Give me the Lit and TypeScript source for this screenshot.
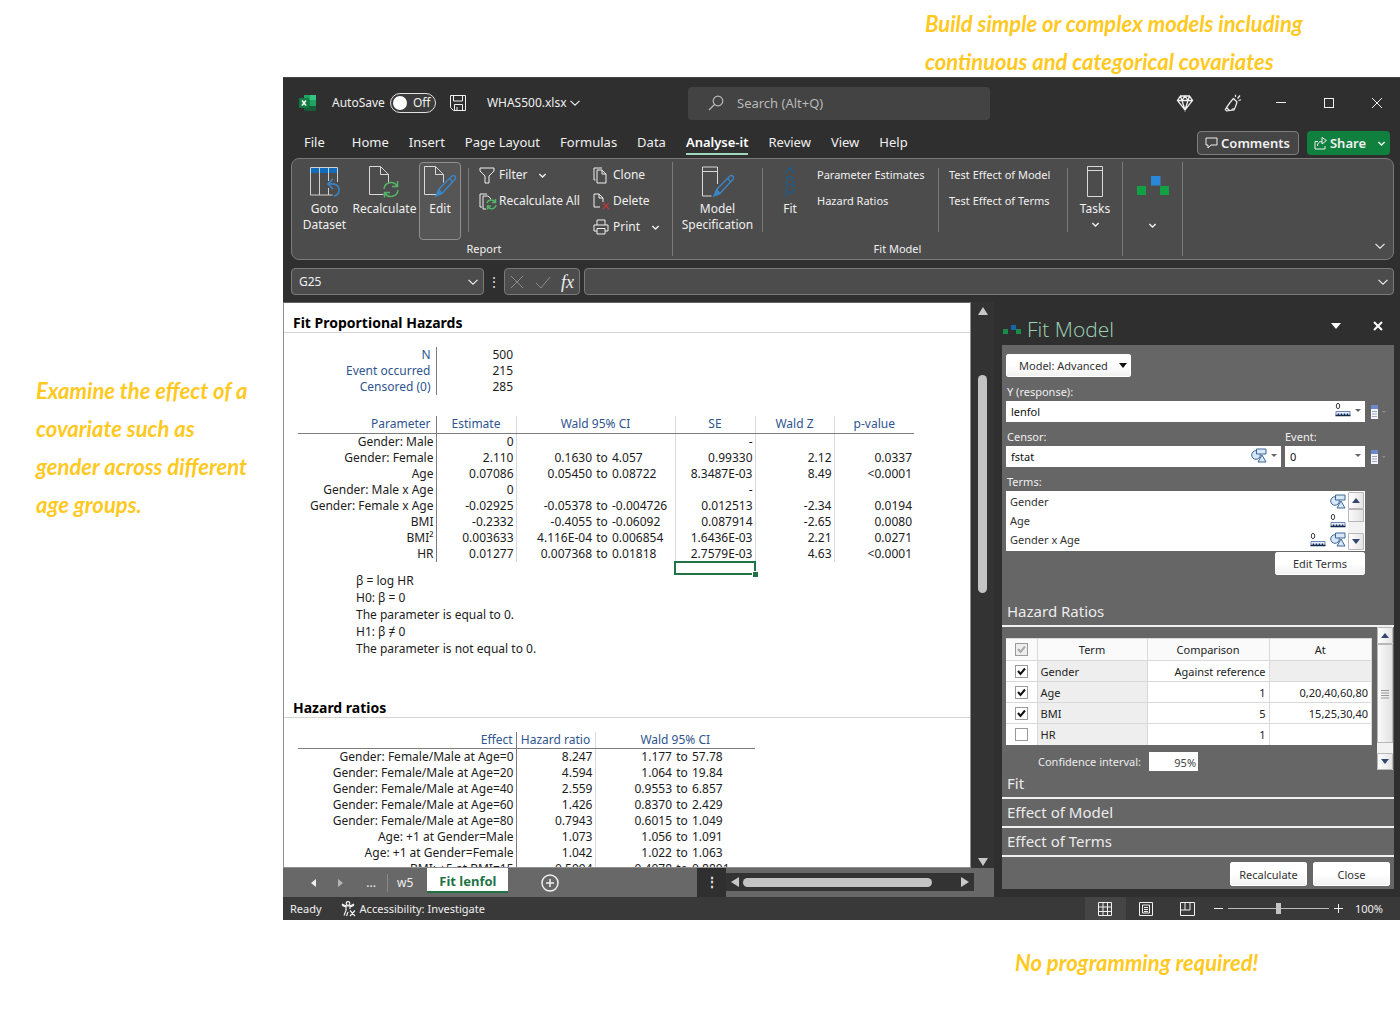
import { LitElement, html, css, svg, nothing } from "lit";
import { customElement, state } from "lit/decorators.js";
import { classMap } from "lit/directives/class-map.js";

const base = css`
  * { box-sizing: border-box; }
  button, select, input { font: inherit; color: inherit; margin: 0; padding: 0; border: 0; background: none; }
  button { cursor: pointer; white-space: nowrap; }
  svg { display: block; flex: none; overflow: visible; }
  svg:not([fill]) { fill: none; }
  svg:not([stroke]) { stroke: currentColor; }
  a { color: inherit; text-decoration: none; }
  table { border-collapse: collapse; table-layout: fixed; }
  h1, h2, p, ul { margin: 0; padding: 0; font-weight: inherit; list-style: none; }
`;

const chevron = (w = 10) => html`<svg width=${w} height=${w} viewBox="0 0 10 10" stroke-width=${w > 8 ? 1.1 : 2} aria-hidden="true"><path d="M.5 2.8 5 7.2 9.5 2.8" /></svg>`;

const page = svg`<path d="M1.5.5h11l8 8v8M20.5 8.5h-8v-8M1.5.5v28h14" stroke="#d8d8d8"/>`;
const pencil = svg`<path d="m16 23 13-13q1.8-1 3 .3t0 3L19 27.5l-6 2.5zM26.5 12.5l3 3" stroke="#3a86c8" stroke-width="1.4"/><path d="m16 23-3 7 6-2.5z" fill="#3a86c8" stroke="#3a86c8"/>`;
const cycle = svg`<path d="M16 23a7 7 0 0 1 13-3M30 24a7 7 0 0 1-13 3M29.5 15v5.5H24M16.5 31.5V26.5H22" stroke="#55b567" stroke-width="1.5"/>`;

const icons = {
  excel: html`<svg width="18" height="18" viewBox="0 0 18 18" stroke="none"><path d="M5 1h6v5H5z" fill="#21a366"/><path d="M11 1h6v5h-6z" fill="#33c481"/><path d="M5 6h6v6H5z" fill="#107c41"/><path d="M11 6h6v6h-6z" fill="#21a366"/><path d="M5 12h12v5H5z" fill="#185c37"/><rect x="0" y="4" width="10" height="10" rx="1" fill="#107c41"/><path d="m3 6.500 4 5M7 6.500l-4 5" stroke="#fff" stroke-width="1.5"/></svg>`,
  save: html`<svg width="18" height="18" viewBox="0 0 18 18"><path d="M1.500 1.500h15v15h-12l-3-3zM4.500 1.500v5.500h9V1.500M5.500 16.500v-6h8v6M8 13v3.500"/></svg>`,
  search: html`<svg width="16" height="16" viewBox="0 0 16 16" stroke-width="1.2"><circle cx="10" cy="6" r="4.8"/><path d="M6.500 9.500 1 15"/></svg>`,
  diamond: html`<svg width="16" height="16" viewBox="0 0 16 16" stroke-width="1.3"><path d="M3.500 1h9l3 4.500L8 15 .5 5.500zM.5 5.500h15M5 5.500 8 15l3-9.500L8 1 5 5.500 3.500 1M12.500 1 11 5.500"/></svg>`,
  megaphone: html`<svg width="18" height="18" viewBox="0 0 18 18" stroke-width="1.2"><path d="M9.500 4.500 13 8q-1 4-3 8l-7.500.8L1.300 15.500Q6 8 9.500 4.500zM2.500 13.500l3 3M7.500 16q2-2.500 3 0M11.500 3V.800M13.500 4.500 16 1.500M14.500 6.500l2.500-.8"/></svg>`,
  comment: html`<svg width="13" height="12" viewBox="0 0 13 12"><path d="M1 1h11v7H6l-3 3V8H1z"/></svg>`,
  share: html`<svg width="13" height="13" viewBox="0 0 13 13"><path d="M4 4.500H1v7.500h10V9M3.500 9c0-3 1.500-4.500 4.500-4.500V7l4.500-3.500L8 .500V4.500"/></svg>`,
  goto: html`<svg width="32" height="31" viewBox="0 0 32 31"><path d="M1.500 29V1.500h27V13M10.500 6v23M19.500 6v9M19.500 22v7M28.500 13v3M1.500 29h22" stroke="#d0d0d0"/><path d="M2 2h26v5H2z" fill="#0f6cbd" stroke="none"/><path d="M10.500 2v5M19.500 2v5" stroke="#d0d0d0"/><path d="m24 13-5 5 5 5M19 18h6q5 1 5 6t-5 6" stroke="#3a86c8" stroke-width="1.5"/></svg>`,
  recalc: html`<svg width="34" height="31" viewBox="0 0 34 31">${page}${cycle}</svg>`,
  edit: html`<svg width="34" height="31" viewBox="0 0 34 31">${page}${pencil}</svg>`,
  model: html`<svg width="34" height="31" viewBox="0 0 34 31"><path d="M1.500 1h15v17M1.500 1v29h9M1.500 5.500h15" stroke="#d8d8d8"/>${pencil}</svg>`,
  beta: html`<svg width="12" height="31" viewBox="0 0 12 31"><path d="m2 7 4-6 4 6M2.500 30V12.500q0-2 3-2 4 0 4 3.500T6 18.500q5 0 4.500 4T5 26.500H3M5 18.500h2" stroke="#175f92" stroke-width="1.5" stroke-dasharray="3 1"/></svg>`,
  tasks: html`<svg width="16" height="31" viewBox="0 0 16 31"><path d="M.5.5h15v30H.500zM.5 4.500h15" stroke="#d8d8d8"/></svg>`,
  logo: html`<svg width="34" height="20" viewBox="0 0 34 20" stroke="none"><path d="M1 10h9v9H1zM24 10h9v9h-9z" fill="#11a044"/><path d="M15 0h9.500v9.500H15z" fill="#2b88d8"/></svg>`,
  filter: html`<svg width="18" height="17" viewBox="0 0 18 17"><path d="M1 1h14v3L10 9v7H6V9L1 4z"/></svg>`,
  recalcAll: html`<svg width="18" height="17" viewBox="0 0 18 17"><path d="M3 14H1V1h7M4 16V3h5l3 3M4 16h3"/><path d="M8 10a4.500 4.500 0 0 1 8-1M17 12a4.500 4.500 0 0 1-8 2M16.500 6v3.500H13M8.500 16.500V13H12" stroke="#55b567" stroke-width="1.5"/></svg>`,
  clone: html`<svg width="18" height="17" viewBox="0 0 18 17"><path d="M2.500 13H1V1h8M4 3h5l4 4v9H4zM9 3v4h4"/></svg>`,
  del: html`<svg width="18" height="17" viewBox="0 0 18 17"><path d="M7 14H1V1h5l4 4v4M6 1v4h4"/><path d="m10 10 6 6M16 10l-6 6" stroke="#c1373a" stroke-width="1.3"/></svg>`,
  print: html`<svg width="18" height="16" viewBox="0 0 18 16"><path d="M4 6V1h8v5M4 12H1V6h14v6h-3M4 9.500h8v5.500H4z"/></svg>`,
  ruler: html`<svg width="16" height="14" viewBox="0 0 16 14"><path d="M1 8.500h14v4H1z" fill="#e6eefb" stroke="#6b87b5"/><path d="M.5 12.500h15M3.500 12v-1.500M6.500 12v-1.500M9.500 12v-1.500M12.500 12v-1.500" stroke="#13294f" stroke-width="1.5"/><ellipse cx="3" cy="3" rx="1.7" ry="2.7" stroke="#444"/></svg>`,
  shapes: html`<svg width="16" height="15" viewBox="0 0 16 15" stroke="#3f6796" fill="#d7e8fa"><circle cx="5" cy="7" r="4.3"/><path d="M5.500 1h9.500v5H5.500zM11 7l4 7H7z"/></svg>`,
  column: html`<svg width="7" height="14" viewBox="0 0 7 14" stroke="none"><path d="M0 0h7v14H0z" fill="#f3f5fa"/><path d="M0 0h7v4H0z" fill="#6d89cc"/><path d="M1 6.500h5M1 9h5M1 11.500h5" stroke="#9aa7c4"/></svg>`,
  access: html`<svg width="16" height="16" viewBox="0 0 16 16" stroke-width="1.2"><circle cx="7" cy="2.5" r="1.8"/><path d="M1 4.500 5 6v3.500l-2 5M13 4.500 9 6v2M1 3q2 2 6 2t6-2M5.500 15 7 11M9 9.500l5 5.500M14 9.500 9 15"/></svg>`,
};

const TABS = ["File", "Home", "Insert", "Page Layout", "Formulas", "Data", "Analyse-it", "Review", "View", "Help"];

@customElement("excel-head")
class ExcelHead extends LitElement {
  static styles = [base, css`
    :host { display: block; background: #2f2f2f; color: #f0f0f0; font: 12px/16px "Noto Sans", "Open Sans", sans-serif; padding: 0 6px 7px 8px; border-top: 1px solid #454545; }
    .title { display: flex; align-items: center; height: 50px; padding: 0 10px 0 8px; }
    .left { display: flex; align-items: center; flex: 0 0 389px; }
    .autosave { display: flex; align-items: center; gap: 5px; margin: 0 13px 0 15px; }
    .toggle { display: flex; align-items: center; gap: 6px; width: 46px; height: 20px; border: 1px solid #e0e0e0; border-radius: 10px; padding: 0 2px; background: #3b3b3b; }
    .knob { width: 14px; height: 14px; border-radius: 50%; background: #fff; }
    .file { display: flex; align-items: center; gap: 3px; margin-left: 20px; }
    .search { display: flex; align-items: center; gap: 13px; flex: 0 1 302px; height: 33px; padding: 0 20px; border-radius: 4px; background: #434343; color: #b9b9b9; font-size: 13px; }
    .search input { flex: 1; min-width: 0; outline: 0; }
    .search input::placeholder { color: #b9b9b9; opacity: 1; }
    .right { display: flex; align-items: center; margin-left: auto; gap: 34px; }
    .right button { display: grid; place-content: center; width: 14px; }
    .tabs { display: flex; align-items: center; height: 30px; padding: 0 4px 0 13px; gap: 20px; font-size: 13px; }
    .tabs a { padding: 3px 0; height: 24px; line-height: 16px; white-space: nowrap; }
    .tabs .first { margin-right: 7px; }
    .tabs .on { font-weight: 600; color: #fff; border-bottom: 2px solid #9fd8bd; }
    .actions { display: flex; gap: 8px; margin-left: auto; font-weight: 600; }
    .actions button { display: flex; align-items: center; gap: 3px; height: 24px; border-radius: 4px; padding: 0 8px 0 7px; }
    .comments { border: 1px solid #7f7f7f; background: #454545; }
    .actions .share { background: #10803f; padding: 0 5px 0 7px; }
    .share span { margin-right: 9px; }
    .ribbon { display: flex; height: 102px; border: 1px solid #7a7a7a; border-radius: 8px; background: #4c4c4c; padding: 3px 8px 2px 4px; }
    .group { display: flex; flex-direction: column; border-right: 1px solid #7a7a7a; height: 94px; }
    .items { display: flex; flex: 1; }
    .label { text-align: center; font-size: 11px; line-height: 15px; }
    .big { display: flex; flex-direction: column; align-items: center; gap: 4px; padding-top: 3px; height: 78px; border: 1px solid transparent; border-radius: 4px; line-height: 16px; }
    .txt { white-space: pre-line; }
    .goto { width: 57px; } .recalc { width: 63px; } .active { width: 42px; margin: 0 7px 0 3px; border-color: #8f8f8f; background: #565656; }
    .spec { width: 89px; } .std { width: 54px; }
    .lead { width: 59px; padding-top: 13px; gap: 26px; }
    .rule { width: 1px; height: 64px; margin-top: 6px; background: #7a7a7a; }
    .list { display: flex; flex-direction: column; align-items: flex-start; }
    .list button { display: flex; align-items: center; gap: 2px; height: 26px; }
    .caret { margin-left: 10px; }
    .report { width: 114px; padding-left: 10px; }
    .copy { padding-left: 10px; width: 89px; }
    .fits { width: 121px; font-size: 11px; }
    .tests { width: 128px; padding-left: 10px; font-size: 11px; }
    .more { margin: auto 0 6px auto; }
    .bar { display: flex; margin-top: 8px; height: 27px; }
    .box { display: flex; align-items: center; justify-content: space-between; border: 1px solid #7a7a7a; border-radius: 4px; background: #4c4c4c; padding: 0 5px 0 7px; }
    .name { width: 193px; }
    .name input { width: 100px; outline: 0; }
    .dots { width: 20px; text-align: center; line-height: 27px; }
    .fx { width: 76px; margin-right: 4px; padding: 0 5px; }
    .dim { color: #8b8b8b; }
    .fn { font: italic 18px/20px "Liberation Serif", serif; }
    .formula { flex: 1; }
    .formula input { flex: 1; min-width: 0; outline: 0; }
  `];
  big(label: string, icon: unknown, kind: string, extra: unknown = nothing) {
    return html`<button class=${classMap({ big: true, [kind]: true })}>${icon}<span class="txt">${label}</span>${extra}</button>`;
  }
  render() {
    return html`
      <div class="title">
        <div class="left">
          ${icons.excel}
          <div class="autosave"><span id="as">AutoSave</span><button class="toggle" role="switch" aria-checked="false" aria-labelledby="as"><span class="knob"></span>Off</button></div>
          <button aria-label="Save">${icons.save}</button>
          <button class="file">WHAS500.xlsx ${chevron()}</button>
        </div>
        <label class="search">${icons.search}<input type="text" placeholder="Search (Alt+Q)" aria-label="Search"></label>
        <div class="right">
          <button aria-label="Premium">${icons.diamond}</button>
          <button aria-label="What's new">${icons.megaphone}</button>
          <button aria-label="Minimize"><svg width="12" height="12"><path d="M1 5.500h10"/></svg></button>
          <button aria-label="Maximize"><svg width="12" height="12"><rect x="1.5" y="1.5" width="9" height="9"/></svg></button>
          <button aria-label="Close"><svg width="12" height="12"><path d="m1 1 10 10M11 1 1 11"/></svg></button>
        </div>
      </div>
      <nav class="tabs">
        ${TABS.map((t, i) => html`<a href="#" class=${classMap({ on: t === "Analyse-it", first: i === 0 })}>${t}</a>`)}
        <div class="actions">
          <button class="comments">${icons.comment}Comments</button>
          <button class="share">${icons.share}<span>Share</span>${chevron(7)}</button>
        </div>
      </nav>
      <div class="ribbon">
        <div class="group">
          <div class="items">
            ${this.big("Goto\nDataset", icons.goto, "goto")}
            ${this.big("Recalculate", icons.recalc, "recalc")}
            ${this.big("Edit", icons.edit, "active")}
            <div class="rule"></div>
            <div class="list report">
              <button>${icons.filter}Filter <span class="caret">${chevron(7)}</span></button>
              <button>${icons.recalcAll}Recalculate All</button>
            </div>
            <div class="list copy">
              <button>${icons.clone}Clone</button>
              <button>${icons.del}Delete</button>
              <button>${icons.print}Print <span class="caret">${chevron(7)}</span></button>
            </div>
          </div>
          <div class="label">Report</div>
        </div>
        <div class="group">
          <div class="items">
            ${this.big("Model\nSpecification", icons.model, "spec")}
            <div class="rule"></div>
            ${this.big("Fit", icons.beta, "std")}
            <div class="list fits"><button>Parameter Estimates</button><button>Hazard Ratios</button></div>
            <div class="rule"></div>
            <div class="list tests"><button>Test Effect of Model</button><button>Test Effect of Terms</button></div>
            <div class="rule"></div>
            ${this.big("Tasks", icons.tasks, "std", chevron(7))}
          </div>
          <div class="label">Fit Model</div>
        </div>
        <div class="group">
          <button class="big lead" aria-label="Analyse-it">${icons.logo}${chevron(7)}</button>
        </div>
        <button class="more" aria-label="Ribbon options">${chevron()}</button>
      </div>
      <div class="bar">
        <div class="box name"><input type="text" value="G25" aria-label="Name box">${chevron()}</div>
        <div class="dots">⋮</div>
        <div class="box fx">
          <button class="dim" aria-label="Cancel"><svg width="14" height="14"><path d="m1 1 12 12M13 1 1 13"/></svg></button>
          <button class="dim" aria-label="Enter"><svg width="16" height="14"><path d="m1 8 5 5L15 2"/></svg></button>
          <button class="fn" aria-label="Insert function">fx</button>
        </div>
        <div class="box formula"><input type="text" aria-label="Formula">${chevron()}</div>
      </div>
    `;
  }
}

const TOTALS = [["N", "500"], ["Event occurred", "215"], ["Censored (0)", "285"]];
const PARAMS: string[][] = [
  ["Gender: Male", "0", "", "", "-", "", ""],
  ["Gender: Female", "2.110", "0.1630", "4.057", "0.99330", "2.12", "0.0337"],
  ["Age", "0.07086", "0.05450", "0.08722", "8.3487E-03", "8.49", "<0.0001"],
  ["Gender: Male x Age", "0", "", "", "-", "", ""],
  ["Gender: Female x Age", "-0.02925", "-0.05378", "-0.004726", "0.012513", "-2.34", "0.0194"],
  ["BMI", "-0.2332", "-0.4055", "-0.06092", "0.087914", "-2.65", "0.0080"],
  ["BMI²", "0.003633", "4.116E-04", "0.006854", "1.6436E-03", "2.21", "0.0271"],
  ["HR", "0.01277", "0.007368", "0.01818", "2.7579E-03", "4.63", "<0.0001"],
];
const RATIOS: string[][] = [
  ["Gender: Female/Male at Age=0", "8.247", "1.177", "57.78"],
  ["Gender: Female/Male at Age=20", "4.594", "1.064", "19.84"],
  ["Gender: Female/Male at Age=40", "2.559", "0.9553", "6.857"],
  ["Gender: Female/Male at Age=60", "1.426", "0.8370", "2.429"],
  ["Gender: Female/Male at Age=80", "0.7943", "0.6015", "1.049"],
  ["Age: +1 at Gender=Male", "1.073", "1.056", "1.091"],
  ["Age: +1 at Gender=Female", "1.042", "1.022", "1.063"],
  ["BMI: +5 at BMI=15", "0.5994", "0.4078", "0.8801"],
];

@customElement("result-sheet")
class ResultSheet extends LitElement {
  static styles = [base, css`
    :host { display: grid; grid-template: minmax(0, 1fr) 29px / minmax(0, 1fr) 23px; contain: size; background: #2f2f2f; font: 12px/16px "Noto Sans", "Open Sans", sans-serif; color: #1c1c1c; }
    .sheet { overflow: hidden; background: #fff; border: 1px solid #8f8f8f; border-top-color: #666; min-height: 0; }
    h1 { font-size: 14px; font-weight: 700; line-height: 20px; padding: 9px 9px 0; height: 29px; border-bottom: 1px solid #d4d4d4; color: #000; }
    table { margin-left: 14px; }
    td, th { padding: 0 2px; height: 16px; line-height: 16px; text-align: right; font-weight: 400; white-space: nowrap; }
    .head th { color: #2f5590; text-align: center; height: 17px; border-bottom: 1px solid #7d7d7d; }
    .head .name, .totals .name { text-align: right; padding-right: 5px; color: #2f5590; }
    .head .effect { padding-right: 3px; }
    .name { border-right: 1px solid #7d7d7d; }
    .line { border-right: 1px solid #d6d9dd; }
    .mid { text-align: center; padding: 0; }
    .up { text-align: left; }
    .totals { margin-top: 14px; }
    .params { margin-top: 21px; }
    .pick { position: relative; height: 12px; outline: 2px solid #217346; outline-offset: -1px; }
    .pick::after { content: ""; position: absolute; right: -3px; bottom: -3px; width: 5px; height: 5px; background: #217346; border: 1px solid #fff; border-width: 1px 0 0 1px; }
    .last td { padding: 0; height: 12px; }
    .notes { margin: -2px 0 0 72px; line-height: 17px; }
    .second { margin-top: 32px; }
    .ratios { margin-top: 14px; }
    .vbar { display: grid; grid-template-rows: 17px 56fr 216fr 260fr 13px; justify-items: center; align-items: center; background: #333; color: #c8c8c8; }
    .thumb { background: #c4c4c4; border-radius: 5px; }
    .vbar .thumb { width: 9px; height: 100%; grid-row: 3; }
    .vbar .down { grid-row: 5; }
    .foot { grid-column: 1 / -1; display: flex; background: #686868; color: #f0f0f0; }
    .nav { display: flex; align-items: center; flex: 1; }
    .nav svg, .vbar svg, .hbar svg { fill: currentColor; stroke: none; }
    .prev { margin-left: 28px; } .next { margin-left: 22px; color: #b5b5b5; }
    .ell { width: 44px; text-align: right; padding-right: 11px; border-right: 1px solid #8a8a8a; margin-left: 1px; height: 18px; line-height: 16px; }
    .w5 { padding: 0 14px 0 9px; }
    .cur { align-self: flex-start; height: 25px; padding: 2px 12px 0; background: #fff; color: #217346; font-size: 13px; font-weight: 700; border-bottom: 2px solid #217346; }
    .add { margin-left: 33px; }
    .nav .add svg { fill: none; stroke: currentColor; }
    .grip { width: 29px; background: #2f2f2f; text-align: center; line-height: 28px; font-weight: 700; }
    .hbar { display: grid; grid-template-columns: 17px 190fr 25fr 17px; align-items: center; justify-items: center; flex: 0 1 248px; height: 18px; margin: 5px 20px 0 0; background: #333; color: #c8c8c8; }
    .hbar .thumb { height: 9px; width: 100%; }
    .hbar .end { grid-column: 4; }
    .top { padding-top: 10px; height: 30px; }
  `];
  cols(w: number[]) { return html`<colgroup>${w.map((x) => html`<col style="width:${x}px">`)}</colgroup>`; }
  render() {
    return html`
      <main class="sheet">
        <h1 class="top">Fit Proportional Hazards</h1>
        <table class="totals">${this.cols([138, 79])}
          ${TOTALS.map(([a, b]) => html`<tr><th class="name">${a}</th><td>${b}</td></tr>`)}
        </table>
        <table class="params">${this.cols([138, 80, 78, 16, 65, 80, 79, 80])}
          <tr class="head"><th class="name">Parameter</th><th class="line">Estimate</th><th class="line" colspan="3">Wald 95% CI</th><th class="line">SE</th><th class="line">Wald Z</th><th>p-value</th></tr>
          ${PARAMS.map((r) => html`<tr><td class="name">${r[0]}</td><td class="line">${r[1]}</td><td>${r[2]}</td><td class="mid">${r[2] ? "to" : ""}</td><td class="up line">${r[3]}</td><td class="line">${r[4]}</td><td class="line">${r[5]}</td><td>${r[6]}</td></tr>`)}
          <tr class="last"><td colspan="5"></td><td class="pick"></td></tr>
        </table>
        <div class="notes"><p>β = log HR</p><p>H0: β = 0</p><p>The parameter is equal to 0.</p><p>H1: β ≠ 0</p><p>The parameter is not equal to 0.</p></div>
        <h1 class="second">Hazard ratios</h1>
        <table class="ratios">${this.cols([218, 79, 79, 16, 65])}
          <tr class="head"><th class="name effect">Effect</th><th class="line">Hazard ratio</th><th colspan="3">Wald 95% CI</th></tr>
          ${RATIOS.map((r) => html`<tr><td class="name">${r[0]}</td><td class="line">${r[1]}</td><td>${r[2]}</td><td class="mid">to</td><td class="up">${r[3]}</td></tr>`)}
        </table>
      </main>
      <div class="vbar">
        <svg width="10" height="8"><path d="M0 8 5 0l5 8z"/></svg><div class="thumb"></div><svg class="down" width="10" height="8"><path d="M0 0h10L5 8z"/></svg>
      </div>
      <footer class="foot">
        <div class="nav">
          <button class="prev" aria-label="Previous sheet"><svg width="5" height="8"><path d="M5 0v8L0 4z"/></svg></button>
          <button class="next" aria-label="Next sheet"><svg width="5" height="8"><path d="M0 0v8l5-4z"/></svg></button>
          <button class="ell">...</button><button class="w5">w5</button><button class="cur">Fit lenfol</button>
          <button class="add" aria-label="New sheet"><svg width="18" height="18" stroke-width="1.5"><circle cx="9" cy="9" r="8"/><path d="M9 5v8M5 9h8"/></svg></button>
        </div>
        <div class="grip">⋮</div>
        <div class="hbar"><svg width="8" height="10"><path d="M8 0v10L0 5z"/></svg><div class="thumb"></div><svg class="end" width="8" height="10"><path d="M0 0v10l8-5z"/></svg></div>
      </footer>
    `;
  }
}

const up = html`<svg width="8" height="5"><path d="M0 5 4 0l4 5z"/></svg>`;
const down = html`<svg width="8" height="5"><path d="M0 0h8L4 5z"/></svg>`;

@customElement("fit-pane")
class FitPane extends LitElement {
  @state() rows = [
    { term: "Gender", cmp: "Against reference", at: "", on: true },
    { term: "Age", cmp: "1", at: "0,20,40,60,80", on: true },
    { term: "BMI", cmp: "5", at: "15,25,30,40", on: true },
    { term: "HR", cmp: "1", at: "", on: false },
  ];
  static styles = [base, css`
    :host { display: block; background: #2f2f2f; color: #ececec; font: 11px/15px "Noto Sans", "Open Sans", sans-serif; padding: 0 6px 8px 8px; }
    header { display: flex; align-items: center; height: 43px; padding: 11px 11px 0 1px; }
    h1 { font: 300 21px/28px "Open Sans", "Noto Sans", sans-serif; color: #9ed3b4; margin: 0 auto 0 6px; }
    header button { align-self: flex-start; margin-top: 10px; }
    header button + button { margin: 8px 0 0 32px; }
    .body { background: #666; padding-top: 9px; }
    .form { padding: 0 8px 0 4px; display: grid; grid-template-columns: minmax(0, 1fr) 15px; column-gap: 6px; align-items: center; }
    .white { height: 23px; border-radius: 2px; background: linear-gradient(#fff 50%, #f1f1f1); border: 1px solid #fff; color: #333; }
    .mode { justify-self: start; display: flex; align-items: center; justify-content: space-between; padding: 0 3px 0 12px; width: 125px; }
    .mode svg { fill: #111; }
    .lab { grid-column: 1 / -1; display: flex; line-height: 15px; padding: 7px 22px 2px 1px; color: #f0f0f0; }
    .lab label:first-child { flex: 1; }
    .lab .ev { flex: 0 0 79px; }
    .field { position: relative; height: 21px; background: #fff; color: #111; flex: 1; }
    .field select { appearance: none; width: 100%; height: 21px; padding-left: 5px; outline: 0; }
    .deco { position: absolute; right: 4px; top: 2px; display: flex; gap: 4px; align-items: center; height: 14px; pointer-events: none; }
    .tri { width: 0; height: 0; border: 3px solid transparent; border-top-color: #666; border-bottom: 0; }
    .side .tri { border-width: 2px 2px 0; border-top-color: #8a8a8a; }
    .duo { display: flex; gap: 4px; }
    .duo .ev { flex: 0 0 80px; }
    .side { display: flex; align-items: center; gap: 4px; }
    .terms { display: flex; height: 60px; background: #fff; color: #333; padding: 1px 1px 1px 4px; }
    .terms ul { flex: 1; }
    .terms li { display: flex; align-items: center; gap: 4px; height: 19px; padding-right: 2px; }
    .terms li span { flex: 1; }
    .scroll { display: flex; flex-direction: column; align-items: stretch; width: 16px; background: #f2f2f2; color: #34466f; }
    .scroll button { display: grid; place-items: center; height: 17px; flex: none; border: 1px solid #b8b8b8; background: linear-gradient(90deg, #fff, #e4e4e4); border-radius: 1px; }
    .scroll svg { fill: currentColor; stroke: none; }
    .hold { border: 1px solid #b8b8b8; background: linear-gradient(90deg, #fafafa, #e2e2e2); height: 13px; margin-bottom: auto; display: grid; place-items: center; }
    .edit { width: 90px; justify-self: end; margin-top: 1px; }
    .sec { display: block; width: 100%; text-align: left; font-size: 15px; line-height: 19px; padding: 4px 5px; height: 29px; border-bottom: 2px solid #f0f0f0; }
    .hr { margin-top: 23px; }
    .haz { display: flex; padding-right: 1px; height: 143px; }
    .haz .hold { flex: 1; margin-bottom: 10px; }
    .inner { flex: 1; padding: 11px 5px 0 4px; }
    table { width: 100%; color: #222; background: #fff; }
    th, td { height: 21px; border: 1px solid #d9d9d9; border-width: 1px 1px 0 0; font-weight: 400; text-align: right; padding: 0 3px; white-space: nowrap; }
    th { background: #fafafa; text-align: center; height: 22px; }
    td.term, .grey { background: #eee; text-align: left; }
    .c1 { width: 31px; } .c2 { width: 110px; } .c3 { width: 122px; }
    .ck { text-align: center; }
    input[type="checkbox"] { appearance: none; display: block; margin: auto; width: 13px; height: 13px; border: 1px solid #9a9a9a; background: #fff; }
    input:checked { background: url("data:image/svg+xml,%3Csvg xmlns='http://www.w3.org/2000/svg' viewBox='0 0 11 11'%3E%3Cpath d='M2 5l2.500 3L9 2.500' fill='none' stroke='%23111' stroke-width='2'/%3E%3C/svg%3E") #fff; }
    input.all:checked { background: url("data:image/svg+xml,%3Csvg xmlns='http://www.w3.org/2000/svg' viewBox='0 0 11 11'%3E%3Cpath d='M2 5l2.500 3L9 2.500' fill='none' stroke='%23aaa' stroke-width='2'/%3E%3C/svg%3E") #eee; }
    .ci { display: flex; align-items: center; gap: 8px; padding: 7px 0 0 32px; }
    .ci input { width: 49px; height: 19px; background: #fff; color: #444; text-align: right; padding: 3px 2px 0 0; outline: 0; }
    .foot { display: flex; justify-content: flex-end; gap: 6px; padding: 5px 4px 3px; }
    .foot .white { width: 77px; height: 24px; }
  `];
  field(id: string, value: string, icon: unknown, cls = "") {
    return html`<div class="field ${cls}"><select id=${id}><option>${value}</option></select><span class="deco">${icon}<i class="tri"></i></span></div>`;
  }
  render() {
    return html`
      <header>
        <svg width="18" height="9" stroke="none"><path d="M0 4h5v5H0zM13 4h5v5h-5z" fill="#1b8c47"/><path d="M8 0h5v5H8z" fill="#1667a5"/></svg>
        <h1>Fit Model</h1>
        <button aria-label="Pane options"><svg width="10" height="6" stroke="none" fill="#fff"><path d="M0 0h10L5 6z"/></svg></button>
        <button aria-label="Close pane"><svg width="10" height="10" stroke-width="2"><path d="m1 1 8 8M9 1 1 9" stroke="#fff"/></svg></button>
      </header>
      <div class="body">
        <div class="form">
          <button class="white mode">Model: Advanced <svg width="8" height="5" stroke="none"><path d="M0 0h8L4 5z"/></svg></button>
          <div class="lab"><label for="y">Y (response):</label></div>
          ${this.field("y", "lenfol", icons.ruler)}<div class="side">${icons.column}<i class="tri"></i></div>
          <div class="lab"><label for="cen">Censor:</label><label class="ev" for="ev">Event:</label></div>
          <div class="duo">${this.field("cen", "fstat", icons.shapes)}${this.field("ev", "0", nothing, "ev")}</div><div class="side">${icons.column}<i class="tri"></i></div>
          <div class="lab"><span id="terms">Terms:</span></div>
          <div class="terms">
            <ul aria-labelledby="terms"><li><span>Gender</span>${icons.shapes}</li><li><span>Age</span>${icons.ruler}</li><li><span>Gender x Age</span>${icons.ruler}${icons.shapes}</li></ul>
            <div class="scroll"><button aria-label="Scroll up">${up}</button><div class="hold"></div><button aria-label="Scroll down">${down}</button></div>
          </div><span></span>
          <button class="white edit">Edit Terms</button>
        </div>
        <button class="sec hr">Hazard Ratios</button>
        <div class="haz">
          <div class="inner">
            <table>
              <tr><th class="c1"><input class="all" type="checkbox" checked disabled aria-label="All terms"></th><th class="c2">Term</th><th class="c3">Comparison</th><th>At</th></tr>
              ${this.rows.map((r, i) => html`<tr><td class="ck"><input type="checkbox" .checked=${r.on} aria-label=${r.term}></td><td class="term">${r.term}</td><td>${r.cmp}</td><td class=${i ? "" : "grey"}>${r.at}</td></tr>`)}
            </table>
            <div class="ci"><label for="ci">Confidence interval:</label><input id="ci" type="text" value="95%"></div>
          </div>
          <div class="scroll"><button aria-label="Scroll up">${up}</button><div class="hold"><svg width="8" height="8"><path d="M0 .5h8M0 3h8M0 5.500h8M0 8h8" stroke="#999"/></svg></div><button aria-label="Scroll down">${down}</button></div>
        </div>
        <button class="sec">Fit</button><button class="sec">Effect of Model</button><button class="sec">Effect of Terms</button>
        <div class="foot"><button class="white">Recalculate</button><button class="white">Close</button></div>
      </div>
    `;
  }
}

@customElement("app-root")
class AppRoot extends LitElement {
  static styles = [base, css`
    :host { display: grid; grid-template-columns: 283px minmax(0, 1fr); background: #fff; }
    .note { font: italic 700 22px/38px Lato, sans-serif; color: #ffc91f; white-space: nowrap; }
    .top { grid-column: 2; padding: 5px 0 0 642px; height: 77px; }
    .side { padding: 295px 0 0 36px; }
    .bottom { grid-column: 2; padding: 24px 0 0 732px; }
    .work { display: grid; grid-template-columns: minmax(0, 1fr) 406px; }
    .status { display: flex; align-items: center; height: 23px; background: #393939; color: #f0f0f0; font: 11px/16px "Noto Sans", "Open Sans", sans-serif; padding: 0 17px 0 7px; }
    .acc { display: flex; align-items: center; gap: 3px; margin-left: 19px; }
    .views { display: flex; margin-left: auto; margin-right: 6px; }
    .views button { display: grid; place-items: center; width: 41px; height: 23px; }
    .views .on { background: #454545; }
    input { appearance: none; width: 101px; height: 11px; margin: 0 5px; background: linear-gradient(#bbb, #bbb) center / 100% 1px no-repeat; }
    input::-webkit-slider-thumb { appearance: none; width: 5px; height: 11px; background: #c4c4c4; }
    .pct { margin-left: 12px; }
  `];
  render() {
    return html`
      <p class="note top">Build simple or complex models including<br>continuous and categorical covariates</p>
      <p class="note side">Examine the effect of a<br>covariate such as<br>gender across different<br>age groups.</p>
      <div class="window">
        <excel-head></excel-head>
        <div class="work"><result-sheet></result-sheet><fit-pane></fit-pane></div>
        <div class="status">
          <span>Ready</span><button class="acc">${icons.access}Accessibility: Investigate</button>
          <div class="views">
            <button class="on" aria-label="Normal view"><svg width="14" height="14"><path d="M.5.5h13v13H.5zM5 .5v13M9.500.5v13M.5 5h13M.5 9.500h13"/></svg></button>
            <button aria-label="Page layout view"><svg width="14" height="14"><path d="M.5.5h13v13H.5zM3.500 3h7v8h-7zM5 5.500h4M5 7.500h4M5 9.500h4"/></svg></button>
            <button aria-label="Page break view"><svg width="15" height="14"><path d="M.5.5h14v13H.5zM5 .500V8M10 .500V8H.500"/></svg></button>
          </div>
          <button aria-label="Zoom out"><svg width="9" height="9"><path d="M0 4.500h9"/></svg></button>
          <input type="range" min="0" max="100" value="50" aria-label="Zoom">
          <button aria-label="Zoom in"><svg width="9" height="9"><path d="M0 4.500h9M4.500 0v9"/></svg></button>
          <span class="pct">100%</span>
        </div>
      </div>
      <p class="note bottom">No programming required!</p>
    `;
  }
}
